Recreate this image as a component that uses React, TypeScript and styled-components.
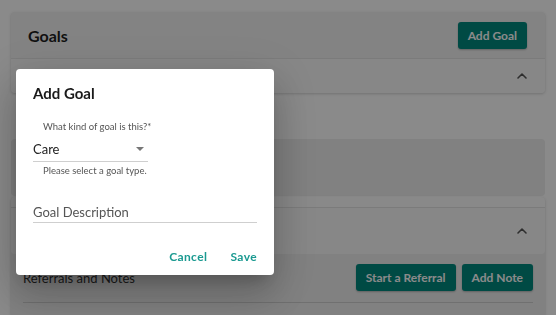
import React from 'react';
import styled, { createGlobalStyle } from 'styled-components';
import { ChevronUp } from 'lucide-react';

const GlobalStyle = createGlobalStyle`
    html, body {
        margin: 0;
        padding: 0;
        background: #ffffff;
        font-family: Lato, "Open Sans", sans-serif;
        color: #222;
        overflow: hidden;
    }
`;

const App: React.FC = () => {
    return (
        <>
            <GlobalStyle />
            <Page>
                <GoalsCard>
                    <CardHeader>
                        <CardTitle>Goals</CardTitle>
                        <PrimaryButton>Add Goal</PrimaryButton>
                    </CardHeader>
                    <AccordionRow $height={34}>
                        <ChevronUp size={16} strokeWidth={2.4} />
                    </AccordionRow>
                </GoalsCard>

                <PlainCard />

                <ReferralsCard>
                    <TopStrip />
                    <AccordionRow $height={46}>
                        <ChevronUp size={16} strokeWidth={2.4} />
                    </AccordionRow>
                    <ReferralsBody>
                        <ReferralsHeader>
                            <SectionLabel>Referrals and Notes</SectionLabel>
                            <ButtonGroup>
                                <PrimaryButton>Start a Referral</PrimaryButton>
                                <PrimaryButton>Add Note</PrimaryButton>
                            </ButtonGroup>
                        </ReferralsHeader>
                        <Divider />
                    </ReferralsBody>
                </ReferralsCard>
            </Page>

            <Backdrop />

            <Dialog>
                <DialogTitle>Add Goal</DialogTitle>
                <Field>
                    <FieldLabel>What kind of goal is this?*</FieldLabel>
                    <SelectBox>
                        <span>Care</span>
                        <Caret />
                    </SelectBox>
                    <HelperText>Please select a goal type.</HelperText>
                </Field>
                <TextInput>Goal Description</TextInput>
                <DialogActions>
                    <TextButton>Cancel</TextButton>
                    <TextButton>Save</TextButton>
                </DialogActions>
            </Dialog>
        </>
    );
};

export default App;

const Page = styled.div`
    width: 556px;
    height: 315px;
    box-sizing: border-box;
    padding: 12px 11px 0 11px;
    display: flex;
    flex-direction: column;
`;

const Card = styled.div`
    background: #f3f3f3;
    border-radius: 4px;
    box-shadow: 0 1px 3px rgba(0, 0, 0, 0.18);
`;

const GoalsCard = styled(Card)`
    display: flex;
    flex-direction: column;
`;

const CardHeader = styled.div`
    height: 46px;
    display: flex;
    align-items: center;
    justify-content: space-between;
    padding: 0 18px 0 17px;
`;

const CardTitle = styled.div`
    font-size: 16px;
    font-weight: 700;
    color: #1e1e1e;
`;

const PrimaryButton = styled.button`
    background: #00897f;
    color: #ffffff;
    border: none;
    border-radius: 3px;
    height: 27px;
    padding: 0 10px;
    font-family: inherit;
    font-size: 12px;
    font-weight: 700;
    letter-spacing: 0;
    box-shadow: 0 1px 2px rgba(0, 0, 0, 0.25);
`;

const AccordionRow = styled.div<{ $height: number }>`
    height: ${({ $height }) => $height}px;
    background: #fafafa;
    border-top: 1px solid #e4e4e4;
    display: flex;
    align-items: center;
    justify-content: flex-end;
    padding-right: 15px;
    color: #555;
    border-radius: 0 0 4px 4px;
`;

const PlainCard = styled(Card)`
    margin-top: 46px;
    height: 57px;
    background: #eeeeee;
    box-shadow: none;
`;

const ReferralsCard = styled(Card)`
    margin-top: 1px;
    flex: 1;
    background: #efefef;
    border-radius: 4px 4px 0 0;
    display: flex;
    flex-direction: column;
`;

const TopStrip = styled.div`
    height: 10px;
    background: #fdfdfd;
    border-radius: 4px 4px 0 0;
`;

const ReferralsBody = styled.div`
    padding: 10px 12px 0 12px;
`;

const ReferralsHeader = styled.div`
    display: flex;
    align-items: center;
    justify-content: space-between;
    height: 27px;
`;

const SectionLabel = styled.div`
    font-size: 13px;
    color: #333;
`;

const ButtonGroup = styled.div`
    display: flex;
    gap: 6px;
`;

const Divider = styled.div`
    margin-top: 11px;
    height: 1px;
    background: #cfcfcf;
`;

const Backdrop = styled.div`
    position: fixed;
    inset: 0;
    background: rgba(0, 0, 0, 0.46);
`;

const Dialog = styled.div`
    position: fixed;
    left: 16px;
    top: 69px;
    width: 258px;
    height: 206px;
    box-sizing: border-box;
    padding: 14px 17px 0 17px;
    background: #ffffff;
    border-radius: 4px;
    box-shadow: 0 11px 15px -7px rgba(0, 0, 0, 0.2), 0 24px 38px 3px rgba(0, 0, 0, 0.14),
        0 9px 46px 8px rgba(0, 0, 0, 0.12);
    display: flex;
    flex-direction: column;
`;

const DialogTitle = styled.div`
    font-size: 15px;
    font-weight: 700;
    color: #1a1a1a;
    line-height: 20px;
`;

const Field = styled.div`
    margin-top: 17px;
    width: 115px;
`;

const FieldLabel = styled.div`
    font-size: 9.5px;
    color: #555;
    padding-left: 10px;
    line-height: 14px;
    white-space: nowrap;
`;

const SelectBox = styled.div`
    margin-top: 3px;
    height: 24px;
    display: flex;
    align-items: center;
    justify-content: space-between;
    border-bottom: 1.5px solid #cfcfcf;
    font-size: 13px;
    color: #222;
    padding-right: 4px;
`;

const Caret = styled.span`
    width: 0;
    height: 0;
    border-left: 4px solid transparent;
    border-right: 4px solid transparent;
    border-top: 4px solid #777;
`;

const HelperText = styled.div`
    margin-top: 2px;
    font-size: 9.5px;
    color: #555;
    padding-left: 10px;
    line-height: 14px;
    white-space: nowrap;
`;

const TextInput = styled.div`
    margin-top: 24px;
    height: 20px;
    display: flex;
    align-items: center;
    border-bottom: 1.5px solid #cfcfcf;
    font-size: 13px;
    color: #555;
`;

const DialogActions = styled.div`
    margin-top: 26px;
    display: flex;
    justify-content: flex-end;
    gap: 23px;
`;

const TextButton = styled.button`
    background: none;
    border: none;
    padding: 0;
    font-family: inherit;
    font-size: 12px;
    font-weight: 700;
    letter-spacing: 0.4px;
    color: #1b9a91;
`;
